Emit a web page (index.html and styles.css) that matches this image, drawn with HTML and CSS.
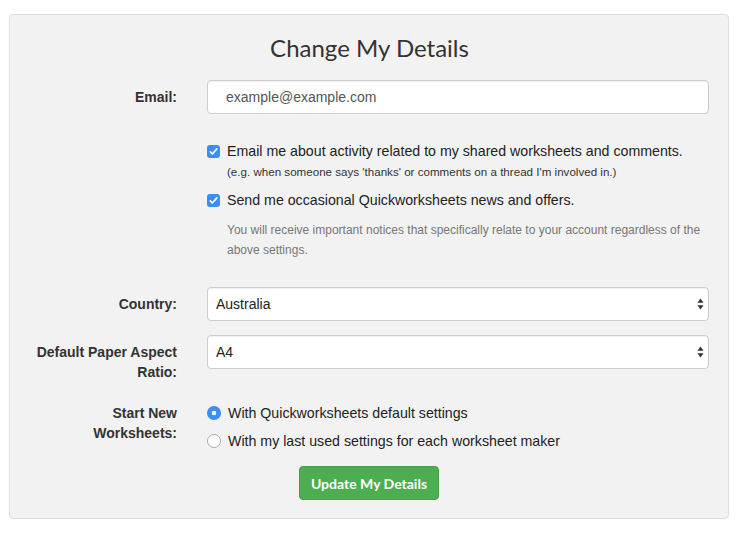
FILE: index.html
```html
<!DOCTYPE html>
<html>
<head>
<meta charset="utf-8">
<link rel="stylesheet" href="styles.css">
</head>
<body>
<div class="panel">
  <h1 class="title">Change My Details</h1>
  <form class="form">
    <div class="row">
      <label class="label" for="email">Email:</label>
      <div class="field">
        <input id="email" class="input email" type="text" placeholder="example@example.com">
      </div>
    </div>
    <div class="row row-checks">
      <div class="label"></div>
      <div class="field checks">
        <label class="check">
          <input type="checkbox" class="cb" checked>
          <span>Email me about activity related to my shared worksheets and comments.</span>
        </label>
        <div class="subnote">(e.g. when someone says 'thanks' or comments on a thread I'm involved in.)</div>
        <label class="check check2">
          <input type="checkbox" class="cb" checked>
          <span>Send me occasional Quickworksheets news and offers.</span>
        </label>
        <p class="help">You will receive important notices that specifically relate to your account regardless of the above settings.</p>
      </div>
    </div>
    <div class="row">
      <label class="label" for="country">Country:</label>
      <div class="field">
        <select id="country" class="input select"><option>Australia</option></select>
      </div>
    </div>
    <div class="row">
      <label class="label" for="paper">Default Paper Aspect Ratio:</label>
      <div class="field">
        <select id="paper" class="input select"><option>A4</option></select>
      </div>
    </div>
    <div class="row row-radios">
      <div class="label">Start New Worksheets:</div>
      <div class="field radios">
        <label class="radio"><input type="radio" name="start" class="rb" checked><span>With Quickworksheets default settings</span></label>
        <label class="radio"><input type="radio" name="start" class="rb"><span>With my last used settings for each worksheet maker</span></label>
      </div>
    </div>
    <div class="actions">
      <button type="button" class="btn">Update My Details</button>
    </div>
  </form>
</div>
</body>
</html>
```
FILE: styles.css
```css
html, body {
  margin: 0;
  padding: 0;
  background: #ffffff;
}
body {
  font-family: "Liberation Sans", Arial, sans-serif;
  font-size: 14px;
  color: #333333;
}
.panel {
  box-sizing: border-box;
  width: 720px;
  margin: 14px 0 0 9px;
  padding: 20px 19px 18px 15px;
  background: #f2f2f2;
  border: 1px solid #dddddd;
  border-radius: 4px;
}
.title {
  margin: 0 0 19px 0;
  padding-left: 5px;
  font-family: Lato, "Open Sans", sans-serif;
  font-weight: 400;
  font-size: 24px;
  line-height: 26px;
  text-align: center;
  color: #333333;
}
.form {
  display: flex;
  flex-direction: column;
}
.row {
  display: grid;
  grid-template-columns: 152px 1fr;
  column-gap: 30px;
  margin-bottom: 14px;
  padding-left: 0;
}
.label {
  padding-top: 7px;
  text-align: right;
  font-weight: 700;
  font-size: 14px;
  line-height: 20px;
  color: #333333;
}
.field {
  min-width: 0;
}
.input {
  box-sizing: border-box;
  display: block;
  width: 100%;
  height: 34px;
  margin: 0;
  background: #ffffff;
  border: 1px solid #cccccc;
  border-radius: 4px;
  box-shadow: inset 0 1px 1px rgba(0,0,0,0.06);
  font-family: "Liberation Sans", Arial, sans-serif;
  font-size: 14px;
  color: #333333;
  outline: none;
}
.email {
  padding: 0 12px 0 18px;
}
.email::placeholder {
  color: #555555;
}
.select {
  -webkit-appearance: none;
  appearance: none;
  padding: 0 24px 0 8px;
  color: #222222;
  background-image: url("data:image/svg+xml;utf8,<svg xmlns='http://www.w3.org/2000/svg' width='7' height='12' viewBox='0 0 7 12'><path d='M3.5 0.5 L6.5 4.8 L0.5 4.8 Z' fill='%23333'/><path d='M3.5 11.5 L6.5 7.2 L0.5 7.2 Z' fill='%23333'/></svg>");
  background-repeat: no-repeat;
  background-position: right 4px center;
  background-size: 7px 12px;
}
.row-checks {
  margin-top: 13px;
  margin-bottom: 27px;
}
.row-checks .label {
  padding-top: 0;
}
.checks {
  display: flex;
  flex-direction: column;
}
.check {
  display: flex;
  align-items: center;
  gap: 7px;
  font-size: 14.2px;
  line-height: 20px;
  color: #222222;
}
.check2 {
  margin-top: 7px;
}
.cb, .rb {
  -webkit-appearance: none;
  appearance: none;
  flex: none;
  margin: 0;
  width: 13px;
  height: 13px;
  box-sizing: border-box;
}
.cb {
  border-radius: 3px;
  background: #ffffff;
  border: 1px solid #b5b5b5;
}
.cb:checked {
  border: none;
  background-color: #3b8ef3;
  background-image: url("data:image/svg+xml;utf8,<svg xmlns='http://www.w3.org/2000/svg' width='13' height='13' viewBox='0 0 13 13'><path d='M3.3 6.8 L5.4 9 L9.8 3.9' fill='none' stroke='white' stroke-width='1.7' stroke-linecap='round' stroke-linejoin='round'/></svg>");
  background-repeat: no-repeat;
  background-size: 13px 13px;
}
.subnote {
  padding-left: 20px;
  font-size: 11.6px;
  line-height: 22px;
  color: #333333;
}
.help {
  margin: 10px 0 0 0;
  padding-left: 20px;
  font-size: 12px;
  line-height: 20px;
  color: #777777;
}
.row-radios {
  margin-bottom: 15px;
}
.radios {
  display: flex;
  flex-direction: column;
  gap: 8px;
  padding-top: 7px;
}
.radio {
  display: flex;
  align-items: center;
  gap: 7px;
  font-size: 14.2px;
  line-height: 20px;
  color: #222222;
}
.rb {
  border-radius: 50%;
  width: 14px;
  height: 14px;
  background: #ffffff;
  border: 1px solid #aaaaaa;
}
.rb:checked {
  border: none;
  background: radial-gradient(circle, #ffffff 0 2px, #3b8ef3 2.6px);
}
.actions {
  display: flex;
  justify-content: center;
}
.btn {
  box-sizing: border-box;
  width: 140px;
  height: 34px;
  margin-left: 4px;
  border: 1px solid #45a049;
  border-radius: 4px;
  background: #4cae50;
  color: #ffffff;
  font-family: Lato, "Open Sans", sans-serif;
  font-weight: 700;
  font-size: 14px;
  cursor: pointer;
}
```
